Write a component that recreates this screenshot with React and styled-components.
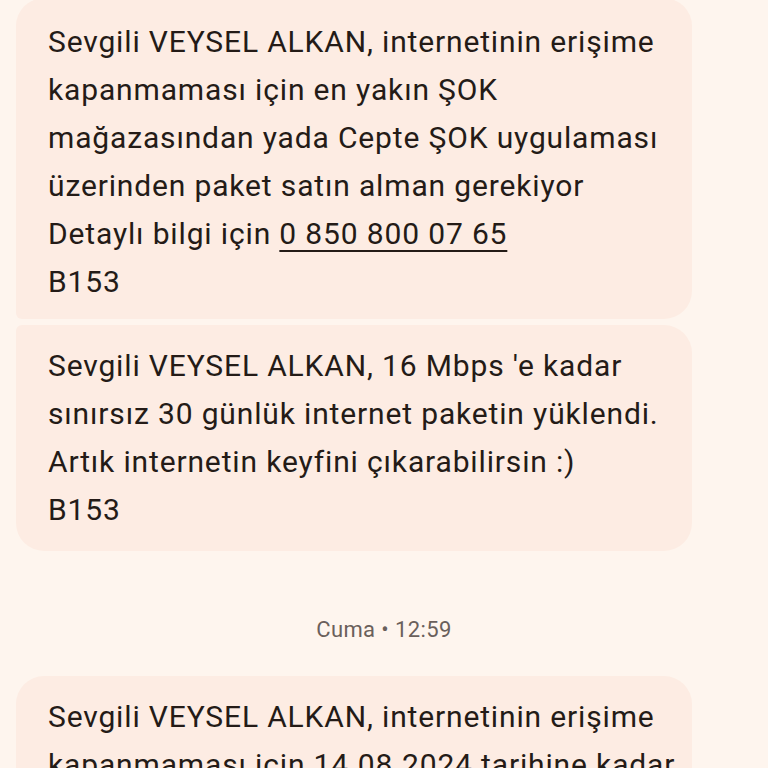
import React from "react";
import styled, { createGlobalStyle } from "styled-components";

const Global = createGlobalStyle`
  html, body {
    margin: 0;
    padding: 0;
    background: #fef5ee;
    overflow: hidden;
  }
  body {
    font-family: Roboto, "Noto Sans", sans-serif;
  }
`;

const Thread = styled.div`
  width: 768px;
  height: 768px;
  overflow: hidden;
  box-sizing: border-box;
  padding: 0 16px;
  display: flex;
  flex-direction: column;
  background: #fef5ee;
`;

const Bubble = styled.div`
  box-sizing: border-box;
  width: 676px;
  flex-shrink: 0;
  background: #fdece3;
  color: #241b17;
  font-size: 30px;
  line-height: 48px;
  letter-spacing: 0.85px;
  padding: ${(p) => p.$pt ?? 17}px 20px ${(p) => p.$pb ?? 17}px 32px;
  margin-top: ${(p) => p.$mt || 0}px;
  border-radius: ${(p) => (p.$first ? 28 : 6)}px 28px 28px
    ${(p) => (p.$last ? 28 : 6)}px;
`;

const Line = styled.div`
  white-space: nowrap;
`;

const Phone = styled.span`
  text-decoration: underline;
  text-decoration-thickness: 2px;
  text-underline-offset: 6px;
`;

const Stamp = styled.div`
  flex-shrink: 0;
  text-align: center;
  font-size: 22px;
  line-height: 24px;
  letter-spacing: 0.4px;
  color: #6a605b;
  margin: 67px 0 34px;
`;

export default function App() {
  return (
    <>
      <Global />
      <Thread>
        <Bubble $first $mt={-2} $pt={20} $pb={13}>
          <Line>Sevgili VEYSEL ALKAN, internetinin erişime</Line>
          <Line>kapanmaması için en yakın ŞOK</Line>
          <Line>mağazasından yada Cepte ŞOK uygulaması</Line>
          <Line>üzerinden paket satın alman gerekiyor</Line>
          <Line>
            Detaylı bilgi için <Phone>0 850 800 07 65</Phone>
          </Line>
          <Line>B153</Line>
        </Bubble>
        <Bubble $last $mt={6}>
          <Line>Sevgili VEYSEL ALKAN, 16 Mbps 'e kadar</Line>
          <Line>sınırsız 30 günlük internet paketin yüklendi.</Line>
          <Line>Artık internetin keyfini çıkarabilirsin :)</Line>
          <Line>B153</Line>
        </Bubble>
        <Stamp>Cuma • 12:59</Stamp>
        <Bubble $first $last>
          <Line>Sevgili VEYSEL ALKAN, internetinin erişime</Line>
          <Line>kapanmaması için 14.08.2024 tarihine kadar</Line>
        </Bubble>
      </Thread>
    </>
  );
}
